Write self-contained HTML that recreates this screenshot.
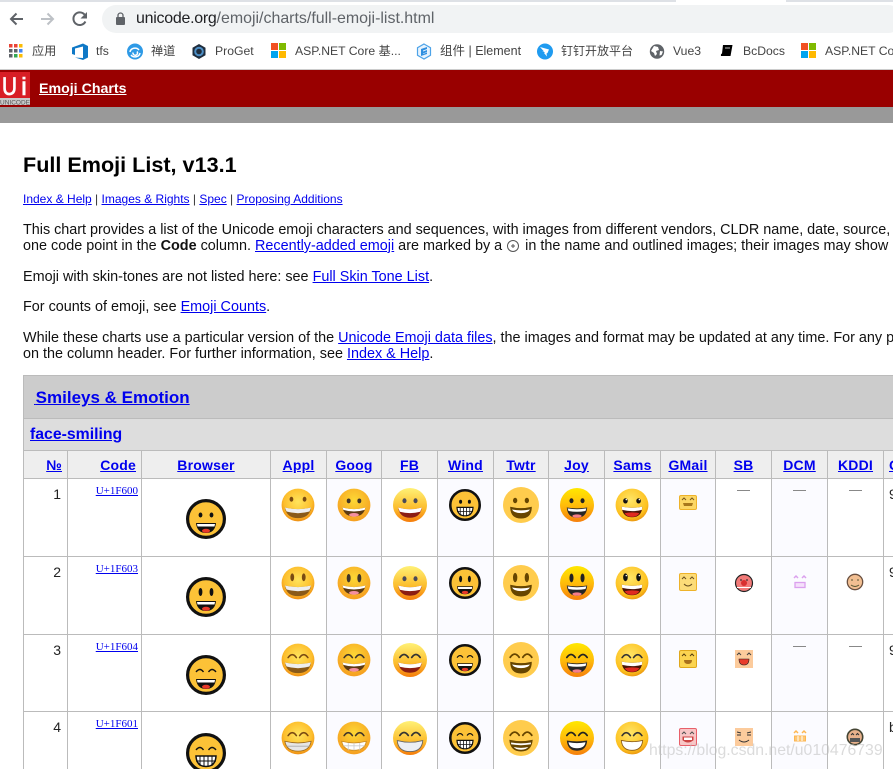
<!DOCTYPE html>
<html lang="en"><head><meta charset="utf-8"><title>Full Emoji List</title>
<style>
html,body{margin:0;padding:0;background:#fff}
#w{position:relative;width:893px;height:769px;overflow:hidden;font-family:"Liberation Sans","Noto Sans CJK SC",sans-serif;color:#000;background:#fff}
.a{position:absolute;white-space:nowrap}
a{color:#00e;text-decoration:underline}
.l{left:23px;font-size:14.4px;line-height:16px;height:16px;color:#111}
.b{font-size:12.2px;line-height:16px;top:43px;color:#444}
#t{position:absolute;left:23px;top:375px;border-collapse:collapse;table-layout:fixed;width:920px}
#t td,#t th{border:1px solid #bbb;padding:0;overflow:hidden;white-space:nowrap;box-sizing:border-box}
#t th{background:#eee;font-size:14px;height:28px;text-align:center;letter-spacing:.2px}
#t td{vertical-align:top;height:78px;font-size:14px}
#t tr.r3 td{height:77px}
#t td.n{text-align:right;padding:7px 6px 0 0;color:#222}
#t td.c{text-align:right;padding:6px 3px 0 0;font:11px "Liberation Serif",serif}
#t td.c a{color:#00e}
#t td.d{text-align:center;color:#777;padding-top:3px;font-size:13px}
#t .x{background:#fbfbff}
#t td.r{text-align:left;padding:7px 0 0 5px;color:#222}
#t td.s1{height:43px;background:#ccc;font-size:17px;font-weight:bold;vertical-align:middle;padding:2px 0 0 10px}
#t td.s2{height:32px;background:#ddd;font-size:15.8px;font-weight:bold;vertical-align:middle;padding-left:6px}
#e,#c{position:absolute;left:0;top:0}
</style></head><body><div id="w">

<div class="a" style="left:0;top:0;width:893px;height:2px;background:#dee1e6"></div>
<div class="a" style="left:676px;top:0;width:110px;height:2px;background:#fff"></div>
<div class="a" style="left:102px;top:5px;width:800px;height:28px;border-radius:14px;background:#f1f3f4"></div>
<div class="a" style="left:136px;top:10px;font-size:15.95px;line-height:18px;color:#5f6368"><span style="color:#202124;letter-spacing:-.25px">unicode.org</span>/emoji/charts/full-emoji-list.html</div>

<div class="a b" style="left:32px">应用</div>
<div class="a b" style="left:96px">tfs</div>
<div class="a b" style="left:151px">禅道</div>
<div class="a b" style="left:215px">ProGet</div>
<div class="a b" style="left:295px">ASP.NET Core 基...</div>
<div class="a b" style="left:440px;font-size:12.5px">组件 | Element</div>
<div class="a b" style="left:561px;font-size:12px">钉钉开放平台</div>
<div class="a b" style="left:673px">Vue3</div>
<div class="a b" style="left:743px">BcDocs</div>
<div class="a b" style="left:825px">ASP.NET Core 基...</div>

<div class="a" style="left:0;top:69px;width:893px;height:1px;background:#ccc"></div>
<div class="a" style="left:0;top:70px;width:893px;height:37px;background:#900"></div>
<div class="a" style="left:0;top:107px;width:893px;height:16px;background:#999"></div>
<div class="a" style="left:39px;top:81px;font-size:14.2px;font-weight:bold;line-height:16px"><a style="color:#fff">Emoji Charts</a></div>

<div class="a" style="left:23px;top:151px;font-size:21.6px;font-weight:bold;line-height:28px">Full Emoji List, v13.1</div>
<div class="a" style="left:23px;top:191px;font-size:12px;line-height:16px;color:#333"><a>Index &amp; Help</a> | <a>Images &amp; Rights</a> | <a>Spec</a> | <a>Proposing Additions</a></div>
<div class="a l" style="top:222px;letter-spacing:-.015px">This chart provides a list of the Unicode emoji characters and sequences, with images from different vendors, CLDR name, date, source, and keywords.</div>
<div class="a l" style="top:238px">one code point in the <b>Code</b> column. <a>Recently-added emoji</a> are marked by a <span style="display:inline-block;width:15px"></span> in the name and outlined images; their images may show a</div>
<div class="a l" style="top:269px">Emoji with skin-tones are not listed here: see <a>Full Skin Tone List</a>.</div>
<div class="a l" style="top:299px">For counts of emoji, see <a>Emoji Counts</a>.</div>
<div class="a l" style="top:330px">While these charts use a particular version of the <a>Unicode Emoji data files</a>, the images and format may be updated at any time. For any problems</div>
<div class="a l" style="top:346px">on the column header. For further information, see <a>Index &amp; Help</a>.</div>

<table id="t">
<colgroup><col style="width:44px"><col style="width:74px"><col style="width:129px"><col style="width:56px"><col style="width:55px"><col style="width:56px"><col style="width:56px"><col style="width:55px"><col style="width:56px"><col style="width:56px"><col style="width:55px"><col style="width:56px"><col style="width:56px"><col style="width:56px"><col style="width:60px"></colgroup>
<tr><td class="s1" colspan="15"><a><span style="font-size:6px">&nbsp;</span>Smileys &amp; Emotion</a></td></tr>
<tr><td class="s2" colspan="15" style="height:32px"><a>face-smiling</a></td></tr>
<tr><th style="text-align:right;padding-right:5px"><a>№</a></th><th style="text-align:right;padding-right:5px"><a>Code</a></th><th><a>Browser</a></th><th><a>Appl</a></th><th><a>Goog</a></th><th><a>FB</a></th><th><a>Wind</a></th><th><a>Twtr</a></th><th><a>Joy</a></th><th><a>Sams</a></th><th><a>GMail</a></th><th><a>SB</a></th><th><a>DCM</a></th><th><a>KDDI</a></th><th style="text-align:left;padding-left:5px"><a>Gmail</a></th></tr>
<tr><td class="n">1</td><td class="c"><a>U+1F600</a></td><td></td><td></td><td class="x"></td><td></td><td class="x"></td><td></td><td class="x"></td><td></td><td class="x"></td><td class="d">—</td><td class="d x">—</td><td class="d">—</td><td class="r">9</td></tr>
<tr><td class="n">2</td><td class="c"><a>U+1F603</a></td><td></td><td></td><td class="x"></td><td></td><td class="x"></td><td></td><td class="x"></td><td></td><td class="x"></td><td></td><td class="x"></td><td></td><td class="r">9</td></tr>
<tr class="r3"><td class="n">3</td><td class="c"><a>U+1F604</a></td><td></td><td></td><td class="x"></td><td></td><td class="x"></td><td></td><td class="x"></td><td></td><td class="x"></td><td></td><td class="d x">—</td><td class="d">—</td><td class="r">9</td></tr>
<tr><td class="n">4</td><td class="c"><a>U+1F601</a></td><td></td><td></td><td class="x"></td><td></td><td class="x"></td><td></td><td class="x"></td><td></td><td class="x"></td><td></td><td class="x"></td><td></td><td class="r">b</td></tr>
</table>

<svg id="c" width="893" height="769" viewBox="0 0 893 769" xmlns="http://www.w3.org/2000/svg">
<path d="M23 19H11M16.500 13.500L11 19l5.500 5.500" fill="none" stroke="#5f6368" stroke-width="2"/>
<path d="M41 19H53M47.500 13.500L53 19l-5.500 5.500" fill="none" stroke="#bdc1c6" stroke-width="2"/>
<path d="M85.400 21.500A6.300 6.300 0 1 1 84.600 14.700" fill="none" stroke="#5f6368" stroke-width="2"/>
<path d="M87 12v6.500h-6.500z" fill="#5f6368"/>
<rect x="116" y="17" width="9" height="8" rx="1" fill="#5f6368"/>
<path d="M118 17v-1.500a2.500 2.500 0 0 1 5 0V17" fill="none" stroke="#5f6368" stroke-width="1.300"/>
<g><rect x="9" y="44" width="3.500" height="3.500" fill="#ea4335"/><rect x="14" y="44" width="3.500" height="3.500" fill="#ea4335"/><rect x="19" y="44" width="3.500" height="3.500" fill="#fbbc05"/><rect x="9" y="49" width="3.500" height="3.500" fill="#5f6368"/><rect x="14" y="49" width="3.500" height="3.500" fill="#5f6368"/><rect x="19" y="49" width="3.500" height="3.500" fill="#4285f4"/><rect x="9" y="54" width="3.500" height="3.500" fill="#5f6368"/><rect x="14" y="54" width="3.500" height="3.500" fill="#34a853"/><rect x="19" y="54" width="3.500" height="3.500" fill="#fbbc05"/></g>
<path d="M72 47.500L83 43.500 88 46v11.500L83 60 75 57.500 83 58V46.500L75 48.500V55L72 54z" fill="#0f78c6"/>
<circle cx="135" cy="51.500" r="8" fill="#2e9ae6"/><path d="M130 52a5 4.500 0 0 1 9-2M140 53a5 4.500 0 0 1-9 2M133 52.500a2.300 2.300 0 1 0 4-1" fill="none" stroke="#fff" stroke-width="1.500"/>
<path d="M199 44l6.500 3.700v7.600L199 59l-6.500-3.700v-7.600z" fill="#1f2d3d"/><circle cx="199" cy="51.500" r="3.800" fill="none" stroke="#4d8fc6" stroke-width="2"/>
<g id="ms"><rect x="271" y="43" width="7" height="7" fill="#f25022"/><rect x="279" y="43" width="7" height="7" fill="#7fba00"/><rect x="271" y="51" width="7" height="7" fill="#00a4ef"/><rect x="279" y="51" width="7" height="7" fill="#ffb900"/></g>
<use href="#ms" x="530"/>
<path d="M424 44l6.500 3.700v7.600L424 59l-6.500-3.700v-7.600z" fill="#e8f3fd" stroke="#4da3e8" stroke-width="1.200"/><path d="M421 49l6-2v2l-4 1.500v1l4-1.500v2l-4 1.500v.5l4-1.500v1.500l-6 2z" fill="#2f8fe0"/>
<circle cx="545" cy="51.500" r="8" fill="#1f9bf0"/><path d="M540 47l9 2.500-1.500 3.500-1 .5.500 3-3-3.500 1-.5-3-1.500 2 .5z" fill="#fff"/>
<circle cx="657" cy="51.500" r="7.200" fill="#5f6368"/><path d="M654 46l4 1 1 3-3 1 1 3-2 2-1-3-3-2zM660 51l3 .5-1.500 3.500-2 .5z" fill="#fff"/>
<path d="M723 45h9.500l-2 11h-9.500q-.5-2 1-2.500z" fill="#000"/><path d="M721 56.500h8.500M725 48h5" stroke="#fff" stroke-width=".8" fill="none"/>
<rect x="0" y="72" width="30" height="33" fill="#d81e25"/><rect x="0" y="98" width="30" height="7" fill="#c9c9c9"/>
<text x="2" y="95" fill="#fff" stroke="#fff" stroke-width=".8" font-family="Liberation Sans,sans-serif" font-size="25" textLength="15" lengthAdjust="spacingAndGlyphs">U</text>
<text x="21" y="95" fill="#fff" stroke="#fff" stroke-width=".6" font-family="Liberation Sans,sans-serif" font-size="25" textLength="6" lengthAdjust="spacingAndGlyphs">i</text>
<text x="0" y="104.500" fill="#555" font-family="Liberation Sans,sans-serif" font-size="6.500" textLength="30" lengthAdjust="spacingAndGlyphs">UNICODE</text>
<circle cx="513" cy="246" r="5.500" fill="none" stroke="#555"/><path d="M511 246h4M513 244v4" stroke="#555"/>
</svg>

<svg id="e" width="893" height="769" viewBox="0 0 893 769" xmlns="http://www.w3.org/2000/svg">
<defs>
<radialGradient id="gA" cx=".5" cy=".4" r=".6"><stop offset="0" stop-color="#ffe45c"/><stop offset=".7" stop-color="#fdbf2d"/><stop offset="1" stop-color="#ee8f13"/></radialGradient>
<radialGradient id="gG" cx=".5" cy=".35" r=".7"><stop offset="0" stop-color="#fdd835"/><stop offset="1" stop-color="#f59a1f"/></radialGradient>
<linearGradient id="gF" x1="0" y1="0" x2="0" y2="1"><stop offset="0" stop-color="#fff176"/><stop offset=".6" stop-color="#fcbc2c"/><stop offset="1" stop-color="#f57c0a"/></linearGradient>
<linearGradient id="gJ" x1="0" y1="0" x2="0" y2="1"><stop offset="0" stop-color="#ffe800"/><stop offset=".5" stop-color="#ffbd0a"/><stop offset="1" stop-color="#f57f0c"/></linearGradient>
<radialGradient id="gS" cx=".45" cy=".35" r=".7"><stop offset="0" stop-color="#ffe566"/><stop offset=".75" stop-color="#fdc11e"/><stop offset="1" stop-color="#e58a0c"/></radialGradient>
<g id="A"><circle r="20" fill="url(#gA)"/></g>
<g id="G"><circle r="20" fill="url(#gG)"/></g>
<g id="F"><circle r="20" fill="url(#gF)"/></g>
<g id="J"><circle r="20" fill="url(#gJ)"/></g>
<g id="S"><circle r="20" fill="url(#gS)"/></g>
<g id="T"><circle r="20" fill="#ffcc4d"/></g>
<g id="W"><circle r="18.400" fill="#fcc237" stroke="#111" stroke-width="3.200"/></g>
<g id="er"><ellipse cx="-6.500" cy="-5" rx="2.400" ry="3" fill="currentColor"/><ellipse cx="6.500" cy="-5" rx="2.400" ry="3" fill="currentColor"/></g>
<g id="et"><ellipse cx="-6.500" cy="-6" rx="2.400" ry="5.200" fill="currentColor"/><ellipse cx="6.500" cy="-6" rx="2.400" ry="5.200" fill="currentColor"/></g>
<path id="ea" d="M-12-3Q-7-10-2-3M2-3Q7-10 12-3" fill="none" stroke="currentColor" stroke-width="2" stroke-linecap="round"/>
<g id="wr"><ellipse cx="-5.500" cy="-4" rx="1.900" ry="2.500" fill="#111"/><ellipse cx="5.500" cy="-4" rx="1.900" ry="2.500" fill="#111"/></g>
<g id="wt"><ellipse cx="-5.500" cy="-5" rx="1.900" ry="4" fill="#111"/><ellipse cx="5.500" cy="-5" rx="1.900" ry="4" fill="#111"/></g>
<path id="wa" d="M-10-3Q-6-8-2.500-3M2.500-3Q6-8 10-3" fill="none" stroke="#111" stroke-width="1.400"/>
<g id="ar"><ellipse cx="-8" cy="-7" rx="2.300" ry="3" fill="#7a4a12"/><ellipse cx="8" cy="-7" rx="2.300" ry="3" fill="#7a4a12"/></g>
<g id="at"><ellipse cx="-7" cy="-7" rx="2.300" ry="4.800" fill="#7a4a12"/><ellipse cx="7" cy="-7" rx="2.300" ry="4.800" fill="#7a4a12"/></g>
<g id="mA"><path d="M-16 3Q0 7 16 3 14 16 0 16-14 16-16 3Z" fill="#8a5a18"/><path d="M-16 3Q0 7 16 3L14 8Q0 12-14 8Z" fill="#eee"/></g>
<g id="mAt"><path d="M-16 4Q0 8 16 4 14 16 0 16-14 16-16 4Z" fill="#e6e6e6" stroke="#9a6a20"/><path d="M-14 10H14" stroke="#aaa"/></g>
<g id="mG"><path d="M-14 3Q0 7 14 3 12 14 0 14-12 14-14 3Z" fill="#5d3a12"/><path d="M-14 3Q0 7 14 3L13 6Q0 10-13 6Z" fill="#fff"/><ellipse cy="12" rx="6" ry="2.300" fill="#f48fa0"/></g>
<g id="mGt"><path d="M-15 4Q0 8 15 4 13 15 0 15-13 15-15 4Z" fill="#fff" stroke="#c98a20"/><path d="M-13 9.500H13M-7 6v9M0 6v9M7 6v9" stroke="#ccc"/></g>
<g id="mF"><path d="M-14 3Q0 7 14 3 12 15 0 15-12 15-14 3Z" fill="#8c1d12"/><path d="M-14 3Q0 7 14 3L12 8Q0 11-12 8Z" fill="#fff"/></g>
<g id="mFt"><path d="M-15 3Q0 7 15 3 14 16 0 16-14 16-15 3Z" fill="#eceff3" stroke="#666"/></g>
<g id="mW"><path d="M-10 4H10Q9 14 0 14-9 14-10 4Z" fill="#111"/><path d="M-9 5H9L8.500 7.500H-8.500Z" fill="#fff"/><ellipse cy="11.800" rx="4" ry="2" fill="#e8392a"/></g>
<g id="mWt"><path d="M-10 3H10Q9.500 13.500 0 13.500-9.500 13.500-10 3Z" fill="#fff" stroke="#111" stroke-width="1.500"/><path d="M-10 8H10M-6 3.500V13M-2 3.500V14M2 3.500V14M6 3.500V13" stroke="#111" stroke-width="1"/></g>
<g id="mT"><path d="M-12 2Q0 5 12 2 12 15 0 15-12 15-12 2Z" fill="#664500"/><path d="M-10 5Q0 7 10 5 8 9 0 9-8 9-10 5Z" fill="#fff"/></g>
<g id="mTt"><path d="M-13 2Q0 5 13 2 12 15 0 15-12 15-13 2Z" fill="#664500"/><path d="M-11 5Q0 7 11 5V7Q0 9-11 7ZM-8 10Q0 12 8 10 6 13 0 13-6 13-8 10Z" fill="#fff"/></g>
<g id="mJ"><path d="M-12 3Q0 5 12 3 11 15 0 15-11 15-12 3Z" fill="#262626"/><path d="M-11 4Q0 6 11 4L10 7Q0 9-10 7Z" fill="#fff"/><ellipse cy="13" rx="5.500" ry="2" fill="#f57d8a"/></g>
<g id="mJt"><path d="M-12 3Q0 5 12 3 11 15 0 15-11 15-12 3Z" fill="#262626"/><path d="M-10 5Q0 7 10 5 9 12 0 12-9 12-10 5Z" fill="#fff"/></g>
<g id="mS"><path d="M-12.500 2Q0 5 12.500 2 12 15 0 15-12 15-12.500 2Z" fill="#4a1408"/><path d="M-12.500 2Q0 5 12.500 2L12 6Q0 9-12 6Z" fill="#fff"/><path d="M-9 10Q0 8 9 10 6 14.500 0 14.500-6 14.500-9 10Z" fill="#e02a20"/></g>
<g id="mSt"><path d="M-13 3Q0 6 13 3 12 15 0 15-12 15-13 3Z" fill="#fff" stroke="#8a5a18"/></g>
<g id="esh"><ellipse cx="-8" cy="-5" rx="2.800" ry="3.200" fill="#111"/><ellipse cx="8" cy="-5" rx="2.800" ry="3.200" fill="#111"/><circle cx="-7" cy="-6.500" r=".9" fill="#fff"/><circle cx="9" cy="-6.500" r=".9" fill="#fff"/></g>
<g id="esht"><ellipse cx="-8" cy="-7" rx="2.800" ry="4.800" fill="#111"/><ellipse cx="8" cy="-7" rx="2.800" ry="4.800" fill="#111"/><circle cx="-7" cy="-9" r=".9" fill="#fff"/><circle cx="9" cy="-9" r=".9" fill="#fff"/></g>
</defs>

<g transform="translate(206 519)"><use href="#W"/><use href="#wr"/><use href="#mW"/></g>
<g transform="translate(206 597)"><use href="#W"/><use href="#wt"/><use href="#mW"/></g>
<g transform="translate(206 675)"><use href="#W"/><use href="#wa"/><use href="#mW"/></g>
<g transform="translate(206 753)"><use href="#W"/><use href="#wa"/><use href="#mWt"/></g>
<g transform="translate(298 505) scale(.82)"><use href="#A"/><use href="#ar"/><use href="#mA"/></g>
<g transform="translate(298 583) scale(.82)"><use href="#A"/><use href="#at"/><use href="#mA"/></g>
<g transform="translate(298 660) scale(.82)" color="#7a4a12"><use href="#A"/><use href="#ea"/><use href="#mA"/></g>
<g transform="translate(298 738) scale(.82)" color="#7a4a12"><use href="#A"/><use href="#ea"/><use href="#mAt"/></g>
<g transform="translate(354 505) scale(.82)" color="#40352a"><use href="#G"/><use href="#er"/><use href="#mG"/></g>
<g transform="translate(354 583) scale(.82)" color="#40352a"><use href="#G"/><use href="#et"/><use href="#mG"/></g>
<g transform="translate(354 660) scale(.82)" color="#40352a"><use href="#G"/><use href="#ea"/><use href="#mG"/></g>
<g transform="translate(354 738) scale(.82)" color="#40352a"><use href="#G"/><use href="#ea"/><use href="#mGt"/></g>
<g transform="translate(410 505) scale(.85)" color="#4a4a58"><use href="#F"/><use href="#er"/><use href="#mF"/></g>
<g transform="translate(410 583) scale(.85)" color="#4a4a58"><use href="#F"/><use href="#er"/><use href="#mF"/></g>
<g transform="translate(410 660) scale(.85)" color="#333"><use href="#F"/><use href="#ea"/><use href="#mF"/></g>
<g transform="translate(410 738) scale(.85)" color="#333"><use href="#F"/><use href="#ea"/><use href="#mFt"/></g>
<g transform="translate(465 505) scale(.8)"><use href="#W"/><use href="#wr"/><use href="#mWt"/></g>
<g transform="translate(465 583) scale(.8)"><use href="#W"/><use href="#wt"/><use href="#mW"/></g>
<g transform="translate(465 660) scale(.8)"><use href="#W"/><use href="#wa"/><use href="#mW"/></g>
<g transform="translate(465 738) scale(.8)"><use href="#W"/><use href="#wa"/><use href="#mWt"/></g>
<g transform="translate(521 505) scale(.9)" color="#664500"><use href="#T"/><use href="#er"/><use href="#mT"/></g>
<g transform="translate(521 583) scale(.9)" color="#664500"><use href="#T"/><use href="#et"/><use href="#mT"/></g>
<g transform="translate(521 660) scale(.9)" color="#664500"><use href="#T"/><use href="#ea"/><use href="#mT"/></g>
<g transform="translate(521 738) scale(.9)" color="#664500"><use href="#T"/><use href="#ea"/><use href="#mTt"/></g>
<g transform="translate(577 505) scale(.85)" color="#222"><use href="#J"/><use href="#er"/><use href="#mJ"/></g>
<g transform="translate(577 583) scale(.85)" color="#222"><use href="#J"/><use href="#et"/><use href="#mJ"/></g>
<g transform="translate(577 660) scale(.85)" color="#222"><use href="#J"/><use href="#ea"/><use href="#mJ"/></g>
<g transform="translate(577 738) scale(.85)" color="#222"><use href="#J"/><use href="#ea"/><use href="#mJt"/></g>
<g transform="translate(632 505) scale(.82)"><use href="#S"/><use href="#esh"/><use href="#mS"/></g>
<g transform="translate(632 583) scale(.82)"><use href="#S"/><use href="#esht"/><use href="#mS"/></g>
<g transform="translate(632 660) scale(.82)" color="#333"><use href="#S"/><use href="#ea"/><use href="#mS"/></g>
<g transform="translate(632 738) scale(.82)" color="#333"><use href="#S"/><use href="#ea"/><use href="#mSt"/></g>
<rect x="679.500" y="495.500" width="17" height="14" rx="1.500" fill="#fcd765" stroke="#eeb32a"/><path d="M682 500l2-2 2 2M690 500l2-2 2 2" fill="none" stroke="#7a5a20"/><path d="M683 503h10l-1 3h-8z" fill="#a8781c"/>
<rect x="679.500" y="573.500" width="17" height="17" rx="1.500" fill="#fcdc78" stroke="#eeb32a"/><path d="M682 579l2-2 2 2M690 579l2-2 2 2M684 584q4 4 8 0" fill="none" stroke="#6a5020"/>
<rect x="679.500" y="650.500" width="17" height="17" rx="1.500" fill="#fbd450" stroke="#e0a81c"/><path d="M682 656l2-2 2 2M690 656l2-2 2 2" fill="none" stroke="#5a4210"/><path d="M684 660h8q0 4-4 4t-4-4z" fill="#a8701c"/>
<rect x="679.500" y="728.500" width="17" height="17" rx="1.500" fill="#f8c6c6" stroke="#e8606a"/><path d="M682 734l2-2 2 2M690 734l2-2 2 2" fill="none" stroke="#555"/><path d="M683 737h10v3q-5 4-10 0z" fill="#c44" stroke="#c44"/><rect x="684" y="737.500" width="8" height="2.500" fill="#fff"/>
<circle cx="744" cy="583" r="8.500" fill="#f27a78" stroke="#222" stroke-width="1.200"/><circle cx="744" cy="583" r="3" fill="#d83030"/><path d="M737 587h14v1h-14z" fill="#fff"/><path d="M740 580h2M746 580h2" stroke="#222"/>
<rect x="735" y="650" width="18" height="18" fill="#fccb9c"/><path d="M737 655l2-2 2 2M747 655l2-2 2 2" fill="none" stroke="#444"/><path d="M739 659h10q0 6-5 6t-5-6z" fill="#e83b2a" stroke="#222" stroke-width=".6"/>
<rect x="735" y="728" width="18" height="18" fill="#fccb9c"/><path d="M737 732l4 1M751 732l-4 1M737 735h4M747 735h4" stroke="#333" fill="none"/><path d="M739 740q5 4 10 0" fill="none" stroke="#333"/>
<path d="M794 578l2-2 2 2M802 578l2-2 2 2" fill="none" stroke="#dba0ee" stroke-width="1.500"/><rect x="795" y="582.500" width="10" height="5" fill="#f5e0fb" stroke="#dba0ee" stroke-width="1.300"/>
<path d="M794 733l2-2 2 2M802 733l2-2 2 2" fill="none" stroke="#fdb650" stroke-width="1.500"/><rect x="794.500" y="736" width="11" height="5" fill="#fdc878" stroke="#fdb650"/><path d="M798 736v5M802 736v5" stroke="#fff"/>
<circle cx="855" cy="582" r="7.700" fill="#f2bf92" stroke="#6a5040" stroke-width="1.300"/><path d="M851 580h2M857 580h2" stroke="#553"/><path d="M851 585q4 3 8 0" fill="none" stroke="#553"/>
<circle cx="855" cy="737" r="7.700" fill="#e8b18c" stroke="#443" stroke-width="1.600"/><path d="M851 735l1.500-1.500 1.500 1.500M856 735l1.500-1.500 1.500 1.500" fill="none" stroke="#333"/><rect x="850" y="738" width="10" height="4" fill="#555"/>
</svg>

<div class="a" style="left:649px;top:739px;font-size:15.8px;line-height:24px;color:rgba(190,190,190,.55)">https://blog.csdn.net/u010476739</div>
</div></body></html>
